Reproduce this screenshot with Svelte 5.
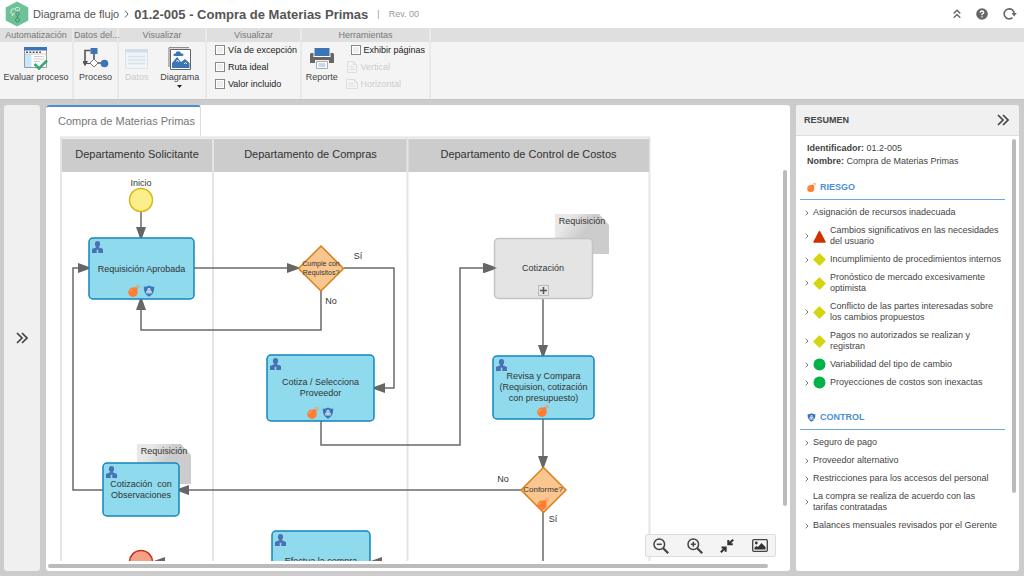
<script lang="ts">
  interface Task {
    x: number;
    y: number;
    w: number;
    h: number;
    lines: string[];
    textY: number;
    risk?: [number, number];
    control?: [number, number];
  }

  const filters = ['Vía de excepción', 'Ruta ideal', 'Valor incluido'];

  const lanes = [
    { x: 62, w: 150, name: 'Departamento Solicitante' },
    { x: 214, w: 193, name: 'Departamento de Compras' },
    { x: 408, w: 241, name: 'Departamento de Control de Costos' }
  ];

  const edges = [
    'M141 212V239',
    'M194 268H299',
    'M321 291V330H141V298',
    'M344 268H394V388H373',
    'M321 421V445H460V268H496',
    'M543 298V357',
    'M543 419V468',
    'M521 490H177',
    'M103 490H73V268H90',
    'M543 512V600',
    'M400 562H370',
    'M200 562H153'
  ];

  const tasks: Task[] = [
    { x: 89, y: 238, w: 105, h: 61, lines: ['Requisición Aprobada'], textY: 272, risk: [128, 285], control: [143, 285] },
    { x: 267, y: 355, w: 107, h: 66, lines: ['Cotiza / Selecciona', 'Proveedor'], textY: 385, risk: [307, 407], control: [322, 407] },
    { x: 493, y: 356, w: 101, h: 63, lines: ['Revisa y Compara', '(Requision, cotización', 'con presupuesto)'], textY: 379, risk: [537, 405] },
    { x: 103, y: 463, w: 76, h: 53, lines: ['Cotización\u00a0 con', 'Observaciones'], textY: 487 },
    { x: 272, y: 531, w: 98, h: 66, lines: ['Efectua la compra'], textY: 564 }
  ];

  const documents = [
    { x: 555, y: 214, label: 'Requisición' },
    { x: 137, y: 444, label: 'Requisición' }
  ];

  const risks = [
    { level: '', text: 'Asignación de recursos inadecuada' },
    { level: 'high', text: 'Cambios significativos en las necesidades del usuario' },
    { level: 'medium', text: 'Incumplimiento de procedimientos internos' },
    { level: 'medium', text: 'Pronóstico de mercado excesivamente optimista' },
    { level: 'medium', text: 'Conflicto de las partes interesadas sobre los cambios propuestos' },
    { level: 'medium', text: 'Pagos no autorizados se realizan y registran' },
    { level: 'low', text: 'Variabilidad del tipo de cambio' },
    { level: 'low', text: 'Proyecciones de costos son inexactas' }
  ];

  const controls = [
    'Seguro de pago',
    'Proveedor alternativo',
    'Restricciones para los accesos del personal',
    'La compra se realiza de acuerdo con las tarifas contratadas',
    'Balances mensuales revisados por el Gerente'
  ];
</script>

{#snippet bomb(x: number, y: number, size: number)}
  <svg {x} {y} width={size} height={size} viewBox="0 0 12 12">
    <circle cx="5" cy="7.2" r="4.700" fill="#ff7d33" />
    <path d="M6 3l1.800-1.200 2.200 2.200-1.200 1.800z" fill="#ff7d33" />
    <path d="M8.600 3.400l1.200-1.200M10 0v1.400M11.800 2.200h-1.200M11.400.6l-.8.8M8.600.6l.6.8" stroke="#ff8d4c" stroke-width="1" />
    <path d="M2.300 6.800a2.700 2.700 0 0 1 2-2.300" fill="none" stroke="#ffc09a" stroke-width=".7" />
  </svg>
{/snippet}

{#snippet shield(x: number, y: number, size: number)}
  <svg {x} {y} width={size} height={size} viewBox="0 0 12 12">
    <path d="M6 .4Q8.400 2 11.200 1.800 11.600 8.800 6 11.800.4 8.800.8 1.800 3.600 2 6 .4z" fill="#3b74b9" />
    <path d="M3.300 8.600h5.400V6.200L7.500 5.600V3.800L6 2.800 4.500 3.800v1.800l-1.200.6z" fill="#dce9f7" />
    <path d="M5.500 4.400h1v1.400h-1zM4.400 6.800h1v1h-1zM6.600 6.800h1v1h-1z" fill="#3b74b9" />
  </svg>
{/snippet}

{#snippet person(x: number, y: number)}
  <g transform="translate({x} {y})" fill="#4872b5">
    <ellipse cx="5.500" cy="3" rx="2.600" ry="3" />
    <path d="M4.200 4.500h2.600v1.700L11 8v4H6.300V8.800H4.700V12H0V8l4.200-1.800z" />
  </g>
{/snippet}

{#snippet chevrons(size: number)}
  <svg width={size} height={size} viewBox="0 0 12 12" fill="none" stroke="#444" stroke-width="1.700" aria-hidden="true">
    <path d="M1 1l5 5-5 5M6 1l5 5-5 5" />
  </svg>
{/snippet}

<div class="app">
  <header class="topbar">
    <svg class="logo" width="24" height="26" viewBox="0 0 24 26" aria-hidden="true">
      <path d="M12 .5L23.300 6.500v13L12 25.500.7 19.500v-13z" fill="#6fc297" />
      <g fill="none" stroke="#d6efe2" stroke-width="1">
        <rect x="10.500" y="6.500" width="4" height="3" rx="1" />
        <path d="M10 8H7.500Q6 8 6 10v1Q6 13 7.500 13H10M7.500 13v2" />
      </g>
      <g fill="none" stroke="#3d8f68" stroke-width="1">
        <path d="M12.500 11l2 2-2 2-2-2zM12.500 15v2" />
        <circle cx="12.500" cy="19" r="2" />
      </g>
    </svg>
    <nav class="crumbs">
      <a href="#diagramas">Diagrama de flujo</a>
      <svg width="5" height="8" viewBox="0 0 5 8" fill="none" stroke="#666" aria-hidden="true"><path d="M1 .5L4 4 1 7.500" /></svg>
      <h1>01.2-005 - Compra de Materias Primas</h1>
      <span class="sep">|</span>
      <span class="revision">Rev. 00</span>
    </nav>
    <div class="top-actions">
      <button aria-label="Contraer">
        <svg width="8" height="10" viewBox="0 0 8 10" fill="none" stroke="#666" stroke-width="1.400"><path d="M.7 4.500L4 1.300l3.300 3.200M.7 8.700L4 5.500l3.300 3.200" /></svg>
      </button>
      <button aria-label="Ayuda">
        <svg width="12" height="12" viewBox="0 0 12 12"><circle cx="6" cy="6" r="5.800" fill="#666" /><path d="M4.200 4.600Q4.300 3 6 3t1.800 1.500Q7.800 5.500 6 6.100V7.200M6 8.200v1.400" fill="none" stroke="#fff" stroke-width="1.300" /></svg>
      </button>
      <button aria-label="Actualizar">
        <svg width="14" height="12" viewBox="0 0 14 12"><path d="M9.500 9.600A5 5 0 1 1 11.200 6" fill="none" stroke="#666" stroke-width="1.600" /><path d="M8.500 5h5.300l-2.700 3.500z" fill="#666" /></svg>
      </button>
    </div>
  </header>

  <div class="ribbon">
    <section class="group evaluate">
      <h2>Automatización</h2>
      <div class="tools">
        <button class="tool">
          <svg width="24" height="23" viewBox="0 0 24 23">
            <path d="M.5.5h22v20H.5z" fill="#fff" stroke="#999" />
            <path d="M0 0h23v3.500H0z" fill="#3b75b5" />
            <path d="M1 7h6.500v13H1z" fill="#c5e8fb" />
            <path d="M2 5.300h15" stroke="#555" stroke-width="1.400" stroke-dasharray="2 1.300" />
            <path d="M1 7h21M10 9.500h10M10 12h10M10 14.500h6" stroke="#ccc" />
            <path d="M10.500 17l4.500 4.500L23 13.500" fill="none" stroke="#36a97b" stroke-width="2.600" />
          </svg>
          <span>Evaluar proceso</span>
        </button>
      </div>
    </section>
    <section class="group process">
      <h2>Datos del...</h2>
      <div class="tools">
        <button class="tool">
          <svg width="26" height="23" viewBox="0 0 26 23">
            <path d="M7.500 3.500H2V15M11 6v6M14 16h6" fill="none" stroke="#555" stroke-width="1.600" />
            <path d="M0 14.500h4L2 18zM2 16.500h6" fill="#555" stroke="#555" stroke-width="1.200" />
            <path d="M7.500 1h7v6h-7z" fill="#3b75b5" />
            <path d="M11 12l4 4-4 4-4-4z" fill="#fff" stroke="#777" />
            <circle cx="21.500" cy="16.500" r="3.800" fill="#3b75b5" />
          </svg>
          <span>Proceso</span>
        </button>
      </div>
    </section>
    <section class="group views">
      <h2>Visualizar</h2>
      <div class="tools">
        <button class="tool" disabled>
          <svg width="24" height="23" viewBox="0 0 24 23">
            <path d="M.5 2.500h22v19H.5z" fill="#eef4f8" stroke="#dde3e8" />
            <path d="M0 2h23v3.500H0z" fill="#d0deec" />
            <path d="M3 9.500h17M3 13h17M3 16.500h17" stroke="#d9e2ea" stroke-width="1.300" />
          </svg>
          <span>Datos</span>
        </button>
        <button class="tool">
          <svg width="24" height="23" viewBox="0 0 24 23">
            <path d="M1 20V.7h20" fill="none" stroke="#777" />
            <path d="M2.500 2.500h20v20h-20z" fill="#fff" stroke="#666" />
            <path d="M4 21v-5l5-6 4 5 4-3 4.500 4v5z" fill="#3b75b5" />
            <path d="M7 9q-2 0-1.600-1.500Q6 6.500 7.500 6.500 8 4 10.500 4.200 13 4.500 13 6.500q2.500-.4 2.500 1.200Q15.500 9 14 9z" fill="#3b75b5" />
            <path d="M8.500 14.500l1-1.500 1.500 2M16 17l1.500-1.500L19 17" fill="none" stroke="#fff" />
          </svg>
          <span>Diagrama</span>
          <svg class="caret" width="5" height="3" viewBox="0 0 5 3"><path d="M0 0h5L2.500 3z" fill="#222" /></svg>
        </button>
      </div>
    </section>
    <section class="group filters">
      <h2>Visualizar</h2>
      <div class="checks">
        {#each filters as filter}
          <label><input type="checkbox" />{filter}</label>
        {/each}
      </div>
    </section>
    <section class="group reports">
      <h2>Herramientas</h2>
      <div class="tools">
        <button class="tool">
          <svg width="24" height="23" viewBox="0 0 24 23">
            <path d="M4.500 1h15v8h-15z" fill="#3b75b5" />
            <path d="M1 6h2.500v3.500h17V6H23q1 0 1 1.500V16h-5v-3H5v3H0V7.500Q0 6 1 6z" fill="#666" />
            <path d="M3.500 9.500h17" stroke="#fff" />
            <path d="M6.500 14.500h11v7h-11z" fill="#fff" stroke="#aaa" />
            <path d="M8.500 17h7M8.500 19h7" stroke="#8ab0dd" />
          </svg>
          <span>Reporte</span>
        </button>
        <div class="checks pages">
          <label class="show-pages"><input type="checkbox" />Exhibir páginas</label>
          <button class="page" disabled>
            <svg width="12" height="12" viewBox="0 0 12 12" fill="none" stroke="#ddd"><path d="M1.500.5h6l3 3v8h-9zM7.500.5v3h3M3.500 6h5M3.500 8.500h5" /></svg>
            Vertical
          </button>
          <button class="page" disabled>
            <svg width="12" height="12" viewBox="0 0 12 12" fill="none" stroke="#ddd"><path d="M.5 1.500h8l3 3v6H.5zM8.500 1.500v3h3M2.500 5.500h5M2.500 8h7" /></svg>
            Horizontal
          </button>
        </div>
      </div>
    </section>
    <div class="group rest"><h2>&nbsp;</h2></div>
  </div>

  <div class="workspace">
    <aside class="rail">
      <button aria-label="Expandir">{@render chevrons(12)}</button>
    </aside>

    <main class="card">
      <a class="tab" href="#diagrama">Compra de Materias Primas</a>
      <div class="canvas">
        <svg width="728" height="425" viewBox="60 136 728 425" role="img" aria-label="Compra de Materias Primas">
          <defs>
            <marker id="arrow" markerUnits="userSpaceOnUse" markerWidth="14" markerHeight="10" refX="12" refY="5" orient="auto">
              <path d="M0 0L14 5 0 10z" fill="#666" />
            </marker>
            <linearGradient id="sheet" x1="0" y1="0.600" x2="0.600" y2="0.900">
              <stop offset="0" stop-color="#e8e8e8" />
              <stop offset="0.600" stop-color="#ccc" />
            </linearGradient>
          </defs>

          <path d="M60 137.500H650M61 137V600M649.500 137V600" class="lane-line" />
          {#each lanes as lane}
            <rect x={lane.x} y="139" width={lane.w} height="33" fill="#ccc" />
            <text x={lane.x + lane.w / 2} y="158" class="lane-name">{lane.name}</text>
          {/each}
          <path d="M213 137V600M407.500 137V600" class="lane-line" />

          {#each edges as d}
            <path {d} class="edge" marker-end="url(#arrow)" />
          {/each}

          {#each documents as doc}
            <path d="M{doc.x} {doc.y}h44l10 11v29h-54z" fill="url(#sheet)" />
            <text x={doc.x + 27} y={doc.y + 10}>{doc.label}</text>
          {/each}

          <circle cx="141" cy="200" r="11.500" fill="#fcee8a" stroke="#d9b915" stroke-width="1.500" />
          <text x="141" y="186">Inicio</text>
          <circle cx="141" cy="562" r="11.500" fill="#f4a188" stroke="#c2341a" stroke-width="1.500" />

          <rect x="494.500" y="238.500" width="98" height="60" rx="4" fill="#e4e4e4" stroke="#c4c4c4" stroke-width="1.500" />
          <path d="M483 263l14 5-14 5z" fill="#666" />
          <text x="543" y="271">Cotización</text>
          <rect x="538.500" y="285.500" width="10" height="10" fill="#e4e4e4" stroke="#bbb" />
          <path d="M540 290.500h7M543.500 287v7" stroke="#555" stroke-width="1.500" />

          {#each tasks as task}
            <rect x={task.x} y={task.y} width={task.w} height={task.h} rx="4" class="task" />
            {@render person(task.x + 3, task.y + 3)}
            {#each task.lines as line, i}
              <text x={task.x + task.w / 2} y={task.textY + i * 11}>{line}</text>
            {/each}
            {#if task.risk}{@render bomb(task.risk[0], task.risk[1], 12)}{/if}
            {#if task.control}{@render shield(task.control[0], task.control[1], 12)}{/if}
          {/each}

          <path d="M321 246l22.500 22.500L321 291l-22.500-22.500z" class="gateway" />
          <text x="321" y="266" class="small">Cumple con</text>
          <text x="321" y="275" class="small">Requisitos?</text>
          <path d="M543.500 467.500L566 490l-22.500 22.500L521 490z" class="gateway" />
          {@render bomb(537, 498, 12)}
          <text x="543" y="492" class="medium">Conforme?</text>

          <text x="358" y="259">Sí</text>
          <text x="331" y="304">No</text>
          <text x="503" y="482">No</text>
          <text x="553" y="522">Sí</text>
        </svg>
      </div>
      <div class="scroll-y"></div>
      <div class="scroll-x"></div>
      <div class="zoom-bar">
        <button aria-label="Alejar">
          <svg width="16" height="16" viewBox="0 0 16 16" fill="none" stroke="#444"><circle cx="6.300" cy="6.300" r="5.300" stroke-width="1.500" /><path d="M3.800 6.300h5" stroke-width="1.500" /><path d="M10.200 10.200l5 5" stroke-width="2.200" /></svg>
        </button>
        <button aria-label="Acercar">
          <svg width="16" height="16" viewBox="0 0 16 16" fill="none" stroke="#444"><circle cx="6.300" cy="6.300" r="5.300" stroke-width="1.500" /><path d="M3.800 6.300h5M6.300 3.800v5" stroke-width="1.500" /><path d="M10.200 10.200l5 5" stroke-width="2.200" /></svg>
        </button>
        <button aria-label="Ajustar">
          <svg width="14" height="14" viewBox="0 0 14 14" fill="none" stroke="#333" stroke-width="2"><path d="M1.500 8.500h4.200v4.200M5.500 8.700L.8 13.300M8.300 1v4.200h4.500M8.500 5L13.200.7" /></svg>
        </button>
        <button aria-label="Imagen">
          <svg width="16" height="13" viewBox="0 0 16 13"><rect x=".7" y=".7" width="14.600" height="11.600" rx="1" fill="none" stroke="#444" stroke-width="1.300" /><circle cx="4.300" cy="4" r="1.400" fill="#333" /><path d="M2.500 10.500V8.500l2-1.500 1.500 1L9.500 4l4 4v2.500z" fill="#333" /></svg>
        </button>
      </div>
    </main>

    <aside class="summary">
      <header>
        <h2>RESUMEN</h2>
        <button aria-label="Ocultar resumen">{@render chevrons(12)}</button>
      </header>
      <div class="content">
        <p><b>Identificador:</b> 01.2-005</p>
        <p><b>Nombre:</b> Compra de Materias Primas</p>

        <h3><svg width="9" height="9" viewBox="0 0 9 9" aria-hidden="true">{@render bomb(0, 0, 9)}</svg>RIESGO</h3>
        <ul>
          {#each risks as risk}
            <li>
              <svg class="mark" width="4" height="6" viewBox="0 0 4 6"><path d="M.7.700L3 3 .7 5.300" /></svg>
              {#if risk.level === 'high'}
                <svg class="level" width="13" height="13" viewBox="0 0 13 13"><path d="M6.500 1.500L12 12H1z" fill="#d03000" stroke="#d03000" stroke-width="1.500" stroke-linejoin="round" /></svg>
              {:else if risk.level === 'medium'}
                <svg class="level" width="13" height="13" viewBox="0 0 13 13"><path d="M6.500 1L12 6.500 6.500 12 1 6.500z" fill="#d5d511" stroke="#d5d511" stroke-width="1.300" stroke-linejoin="round" /></svg>
              {:else if risk.level === 'low'}
                <svg class="level" width="13" height="13" viewBox="0 0 13 13"><circle cx="6.500" cy="6.500" r="6" fill="#00b248" /></svg>
              {/if}
              <span>{risk.text}</span>
            </li>
          {/each}
        </ul>

        <h3><svg width="9" height="9" viewBox="0 0 9 9" aria-hidden="true">{@render shield(0, 0, 9)}</svg>CONTROL</h3>
        <ul class="controls">
          {#each controls as control}
            <li>
              <svg class="mark" width="4" height="6" viewBox="0 0 4 6"><path d="M.7.700L3 3 .7 5.300" /></svg>
              <span>{control}</span>
            </li>
          {/each}
        </ul>
      </div>
      <div class="scroll-y"></div>
    </aside>
  </div>
</div>

<style>
  :global(body) {
    background: #ccc;
    color: #444;
    font-family: "Liberation Sans", Arial, sans-serif;
    font-size: 9px;
  }

  h1, h2, h3, p, ul {
    margin: 0;
    padding: 0;
  }

  button {
    padding: 0;
    border: none;
    background: none;
    color: inherit;
    font: inherit;
    cursor: pointer;
  }

  button:disabled {
    color: #ccc;
    cursor: default;
  }

  svg {
    display: block;
    flex: none;
  }

  .app {
    display: flex;
    flex-direction: column;
    height: 100vh;
  }

  .topbar {
    display: flex;
    align-items: center;
    flex: none;
    height: 28px;
    padding: 0 7px 0 5px;
    background: #fff;
  }

  .crumbs {
    display: flex;
    align-items: center;
    gap: 5px;
    margin-left: 4px;
    color: #555;
  }

  .crumbs a {
    color: #555;
    font-size: 11px;
    text-decoration: none;
  }

  .crumbs h1 {
    font-size: 13px;
  }

  .sep,
  .revision {
    color: #999;
  }

  .sep {
    margin: 0 4px;
  }

  .top-actions {
    display: flex;
    align-items: center;
    gap: 15px;
    margin-left: auto;
  }

  /* Ribbon */
  .ribbon {
    display: flex;
    flex: none;
    height: 71px;
    background: #f4f4f4;
    border-bottom: 1px solid #c4c4c4;
  }

  .group {
    flex: none;
    box-sizing: border-box;
    border-right: 2px solid #e9e9e9;
  }

  .group h2 {
    height: 14px;
    background: #dfdfdf;
    color: #777;
    font-size: 9px;
    font-weight: normal;
    line-height: 14px;
    text-align: center;
    white-space: nowrap;
  }

  .evaluate { width: 74px; }
  .process { width: 45px; }
  .views { width: 88px; }
  .filters { width: 95px; }
  .reports { width: 129px; }

  .rest {
    flex: 1;
    border-right: none;
  }

  .tools {
    display: flex;
    justify-content: space-around;
  }

  .tool {
    display: flex;
    flex-direction: column;
    align-items: center;
    gap: 2px;
    padding-top: 5px;
    line-height: 11px;
    white-space: nowrap;
  }

  .checks {
    display: flex;
    flex-direction: column;
    gap: 5px;
    padding: 2px 8px;
    color: #222;
  }

  .checks label,
  .page {
    display: flex;
    align-items: center;
    gap: 3px;
    height: 12px;
    white-space: nowrap;
  }

  .checks input {
    appearance: none;
    flex: none;
    box-sizing: border-box;
    width: 10px;
    height: 10px;
    margin: 0;
    border: 1px solid #888;
    background: #eee;
    box-shadow: inset 0 0 0 1px #fff;
  }

  .checks input:checked {
    background: #3b75b5;
  }

  .checks.pages {
    padding: 2px 0;
  }

  .show-pages {
    margin-left: 5px;
  }

  /* Workspace */
  .workspace {
    display: flex;
    flex: 1;
    gap: 6px;
    min-height: 0;
    padding: 5px 5px 5px 4px;
  }

  .rail,
  .card,
  .summary {
    border-radius: 3px;
    overflow: hidden;
  }

  .rail {
    display: flex;
    align-items: center;
    justify-content: center;
    flex: none;
    width: 36px;
    background: #f0f0f0;
  }

  .card {
    position: relative;
    display: flex;
    flex-direction: column;
    align-items: flex-start;
    flex: 1;
    min-width: 0;
    background: #fff;
  }

  .tab {
    flex: none;
    height: 29px;
    padding: 0 5px 0 12px;
    border-top: 2px solid #4a90d0;
    border-right: 1px solid #ddd;
    border-radius: 3px 3px 0 0;
    color: #777;
    font-size: 11px;
    line-height: 29px;
    text-decoration: none;
  }

  .canvas {
    flex: 1;
    align-self: stretch;
    min-height: 0;
    margin: 0 0 10px 14px;
    overflow: hidden;
  }

  .canvas text {
    fill: #333;
    font-size: 9px;
    text-anchor: middle;
  }

  .canvas .lane-name {
    font-size: 11px;
  }

  .canvas .small {
    font-size: 7px;
  }

  .canvas .medium {
    font-size: 8px;
  }

  .lane-line {
    stroke: #e4e4e4;
    stroke-width: 2;
  }

  .edge {
    fill: none;
    stroke: #6a6a6a;
    stroke-width: 1.5;
  }

  .task {
    fill: #8fdaec;
    stroke: #1585bd;
    stroke-width: 1.5;
  }

  .gateway {
    fill: #fac690;
    stroke: #d8801a;
    stroke-width: 1.5;
  }

  .scroll-x,
  .scroll-y {
    position: absolute;
    border-radius: 3px;
    background: #bbb;
  }

  .card .scroll-y {
    top: 14%;
    right: 3px;
    bottom: 14%;
    width: 4px;
  }

  .card .scroll-x {
    right: 3%;
    bottom: 3px;
    left: 2px;
    height: 4px;
  }

  .zoom-bar {
    position: absolute;
    right: 14px;
    bottom: 14px;
    display: flex;
    align-items: center;
    justify-content: space-between;
    box-sizing: border-box;
    width: 131px;
    height: 23px;
    padding: 0 7px;
    border: 1px solid #ddd;
    border-radius: 2px;
    background: #f4f4f4;
  }

  /* Summary */
  .summary {
    position: relative;
    flex: none;
    width: 223px;
    background: #fff;
  }

  .summary header {
    display: flex;
    align-items: center;
    justify-content: space-between;
    height: 30px;
    padding: 0 10px 0 8px;
    border-bottom: 1px solid #ddd;
    background: #f0f0f0;
  }

  .summary h2 {
    font-size: 9px;
  }

  .content {
    padding: 6px 14px 0 4px;
  }

  .content p {
    padding-left: 7px;
    line-height: 13px;
  }

  .content h3 {
    display: flex;
    align-items: center;
    gap: 4px;
    height: 24px;
    margin: 7px 0;
    padding-left: 7px;
    border-bottom: 1px solid #6aa8e0;
    color: #4a90d5;
    font-size: 9px;
  }

  .content ul + h3 {
    margin-top: 17px;
  }

  .content ul {
    display: flex;
    flex-direction: column;
    gap: 7px;
    list-style: none;
  }

  .content li {
    display: flex;
    align-items: center;
    gap: 4px;
    padding-left: 5px;
    line-height: 11px;
  }

  .controls {
    padding-right: 6px;
  }

  .mark {
    fill: none;
    stroke: #777;
  }

  .level {
    margin: -1px 0;
  }

  .summary .scroll-y {
    top: 34px;
    right: 3px;
    width: 4px;
    height: 76%;
  }
</style>
